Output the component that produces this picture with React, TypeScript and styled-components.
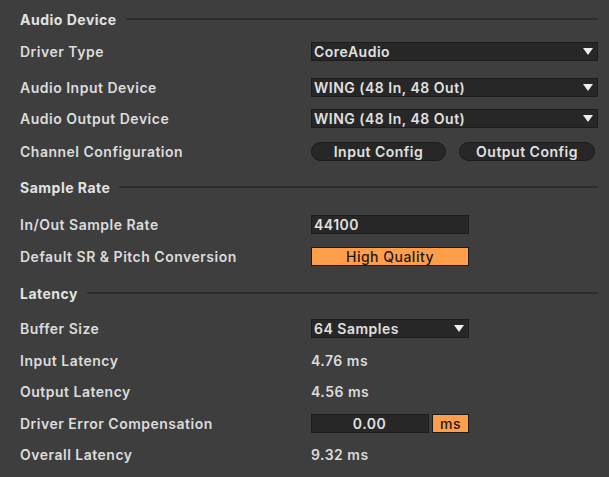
import React from "react";
import styled, { createGlobalStyle } from "styled-components";

const GlobalStyle = createGlobalStyle`
  html, body {
    margin: 0;
    padding: 0;
    background: #3e3e3e;
  }
  body {
    font-family: Inter, "Noto Sans", "Liberation Sans", sans-serif;
    font-size: 14px;
    letter-spacing: 0.5px;
    color: #dedede;
    -webkit-font-smoothing: antialiased;
  }
`;

const Panel = styled.div`
  width: 609px;
  height: 477px;
  box-sizing: border-box;
  padding: 9px 11px 0 20px;
  display: flex;
  flex-direction: column;
  background: #3e3e3e;
`;

const Row = styled.div<{ $gap?: number }>`
  height: 20px;
  margin-top: ${(p) => p.$gap ?? 0}px;
  display: grid;
  grid-template-columns: 291px 1fr;
  align-items: center;
`;

const Header = styled.div<{ $gap?: number }>`
  height: 20px;
  margin-top: ${(p) => p.$gap ?? 0}px;
  display: flex;
  align-items: center;
  gap: 9px;
  font-weight: 700;
  color: #e2e2e2;

  &::after {
    content: "";
    flex: 1;
    height: 2px;
    background: #2d2d2d;
  }
`;

const Label = styled.div`
  font-weight: 600;
  color: #dcdcdc;
  white-space: nowrap;
`;

const Controls = styled.div`
  display: flex;
  align-items: center;
  gap: 13px;
`;

const Box = styled.div<{ $w?: number; $center?: boolean }>`
  width: ${(p) => (p.$w ? `${p.$w}px` : "100%")};
  height: 19px;
  box-sizing: border-box;
  border: 1px solid #1c1c1c;
  background: #272727;
  display: flex;
  align-items: center;
  justify-content: ${(p) => (p.$center ? "center" : "space-between")};
  padding: 0 3px 0 2px;
  font-weight: 600;
  color: #e0e0e0;
  white-space: nowrap;
`;

const Arrow = styled.span`
  width: 0;
  height: 0;
  margin-right: 1px;
  border-left: 5px solid transparent;
  border-right: 5px solid transparent;
  border-top: 7px solid #eeeeee;
`;

const Orange = styled.div<{ $w: number }>`
  width: ${(p) => p.$w}px;
  height: 19px;
  box-sizing: border-box;
  border: 1px solid #1c1c1c;
  background: #ff9e4a;
  display: flex;
  align-items: center;
  justify-content: center;
  font-weight: 500;
  color: #1a1a1a;
`;

const Pill = styled.div<{ $w: number }>`
  width: ${(p) => p.$w}px;
  height: 19px;
  box-sizing: border-box;
  border: 1px solid #1a1a1a;
  border-radius: 10px;
  background: #272727;
  display: flex;
  align-items: center;
  justify-content: center;
  font-weight: 600;
  color: #e0e0e0;
`;

const Value = styled.div`
  font-weight: 600;
  color: #dcdcdc;
`;

const Pair = styled.div`
  display: flex;
  align-items: center;
  gap: 3px;
`;

const Dropdown = ({ text, w }: { text: string; w?: number }) => (
  <Box $w={w}>
    <span>{text}</span>
    <Arrow />
  </Box>
);

export default function App() {
  return (
    <>
      <GlobalStyle />
      <Panel>
        <Header>Audio Device</Header>
        <Row $gap={12}>
          <Label>Driver Type</Label>
          <Dropdown text="CoreAudio" />
        </Row>
        <Row $gap={16}>
          <Label>Audio Input Device</Label>
          <Dropdown text="WING (48 In, 48 Out)" />
        </Row>
        <Row $gap={11}>
          <Label>Audio Output Device</Label>
          <Dropdown text="WING (48 In, 48 Out)" />
        </Row>
        <Row $gap={13}>
          <Label>Channel Configuration</Label>
          <Controls>
            <Pill $w={135}>Input Config</Pill>
            <Pill $w={136}>Output Config</Pill>
          </Controls>
        </Row>

        <Header $gap={16}>Sample Rate</Header>
        <Row $gap={17}>
          <Label>In/Out Sample Rate</Label>
          <Box $w={158}>44100</Box>
        </Row>
        <Row $gap={12}>
          <Label>Default SR &amp; Pitch Conversion</Label>
          <Orange $w={158}>High Quality</Orange>
        </Row>

        <Header $gap={17}>Latency</Header>
        <Row $gap={15}>
          <Label>Buffer Size</Label>
          <Dropdown text="64 Samples" w={158} />
        </Row>
        <Row $gap={12}>
          <Label>Input Latency</Label>
          <Value>4.76 ms</Value>
        </Row>
        <Row $gap={11}>
          <Label>Output Latency</Label>
          <Value>4.56 ms</Value>
        </Row>
        <Row $gap={12}>
          <Label>Driver Error Compensation</Label>
          <Pair>
            <Box $w={118} $center>
              0.00
            </Box>
            <Orange $w={37}>ms</Orange>
          </Pair>
        </Row>
        <Row $gap={11}>
          <Label>Overall Latency</Label>
          <Value>9.32 ms</Value>
        </Row>
      </Panel>
    </>
  );
}
